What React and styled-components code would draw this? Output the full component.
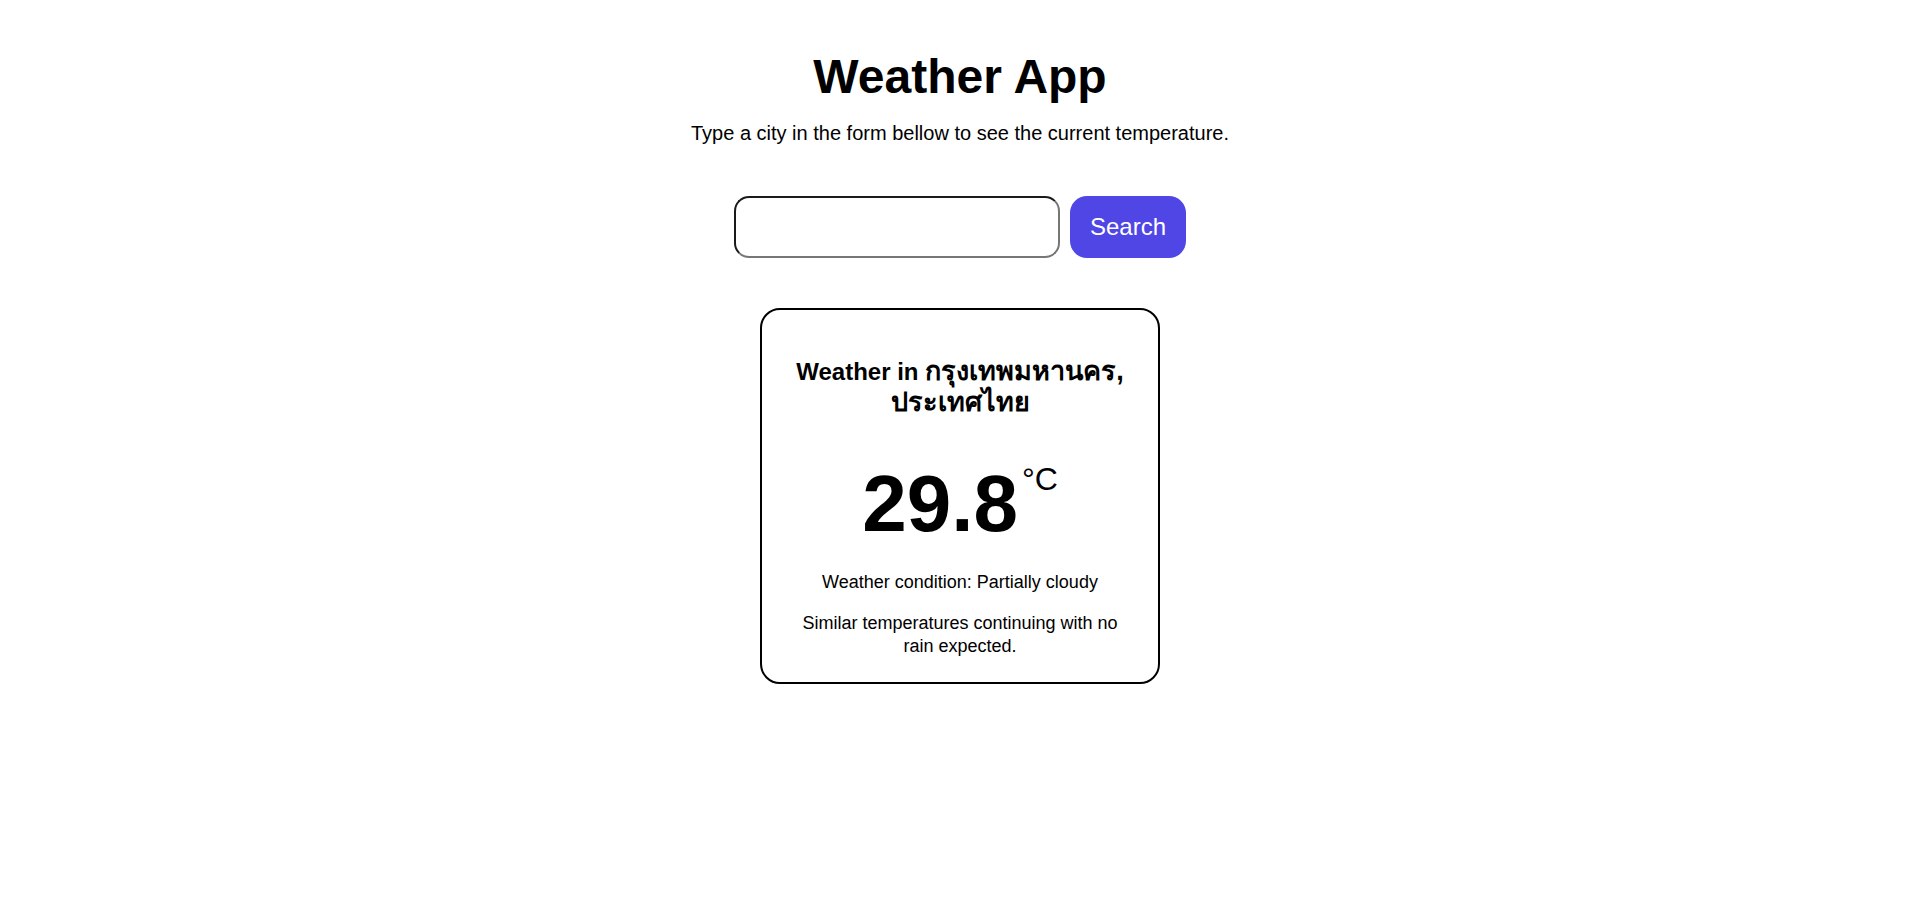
import React, { useState } from "react";
import styled, { createGlobalStyle } from "styled-components";

const GlobalStyle = createGlobalStyle`
  html, body {
    margin: 0;
    padding: 0;
    background: #ffffff;
  }
  body {
    font-family: "Liberation Sans", Arial, "Noto Sans", sans-serif;
    color: #000000;
  }
  * {
    box-sizing: border-box;
  }
`;

function App() {
  const [city, setCity] = useState("");

  const weather = {
    place: "กรุงเทพมหานคร, ประเทศไทย",
    temp: 29.8,
    condition: "Partially cloudy",
    description: "Similar temperatures continuing with no rain expected.",
  };

  const handleSubmit = (e) => {
    e.preventDefault();
  };

  return (
    <>
      <GlobalStyle />
      <Page>
        <Title>Weather App</Title>
        <Subtitle>
          Type a city in the form bellow to see the current temperature.
        </Subtitle>

        <SearchForm onSubmit={handleSubmit}>
          <CityInput
            type='text'
            value={city}
            onChange={(e) => setCity(e.target.value)}
          />
          <SearchButton type='submit'>Search</SearchButton>
        </SearchForm>

        <WeatherCard>
          <CardTitle>
            Weather in <ThaiText>{weather.place}</ThaiText>
          </CardTitle>
          <TempRow>
            <TempValue>{weather.temp}</TempValue>
            <TempUnit>°C</TempUnit>
          </TempRow>
          <CardText>Weather condition: {weather.condition}</CardText>
          <CardText $gap>{weather.description}</CardText>
        </WeatherCard>
      </Page>
    </>
  );
}

export default App;

const Page = styled.div`
  display: flex;
  flex-direction: column;
  align-items: center;
  padding: 49px 0 40px 5px;
  text-align: center;
`;

const Title = styled.h1`
  margin: 0;
  font-size: 48px;
  line-height: 55px;
  font-weight: bold;
`;

const Subtitle = styled.p`
  margin: 18px 0 0;
  font-size: 20px;
  line-height: 23px;
`;

const SearchForm = styled.form`
  display: flex;
  gap: 10px;
  margin-top: 51px;
`;

const CityInput = styled.input`
  width: 326px;
  height: 62px;
  border-width: 2px;
  border-style: solid;
  border-color: #1a1a1a #767676 #767676 #1a1a1a;
  border-radius: 15px;
  padding: 0 14px;
  font-size: 20px;
  font-family: inherit;
  outline: none;
`;

const SearchButton = styled.button`
  display: flex;
  align-items: center;
  justify-content: center;
  width: 116px;
  height: 62px;
  border: none;
  border-radius: 17px;
  background-color: #4f46e5;
  color: #ffffff;
  font-family: inherit;
  font-size: 24px;
  cursor: pointer;
`;

const WeatherCard = styled.div`
  display: flex;
  flex-direction: column;
  align-items: center;
  width: 400px;
  margin-top: 50px;
  padding: 46px 30px 24px;
  border: 2px solid #000000;
  border-radius: 20px;
`;

const CardTitle = styled.h2`
  margin: 0;
  font-size: 24px;
  line-height: 31px;
  font-weight: bold;
`;

const ThaiText = styled.span`
  font-size: 27px;
`;

const TempRow = styled.div`
  display: flex;
  align-items: flex-start;
  margin-top: 46px;
`;

const TempValue = styled.div`
  font-size: 80px;
  line-height: 80px;
  font-weight: bold;
`;

const TempUnit = styled.span`
  font-size: 32px;
  line-height: 32px;
  margin-top: -1px;
  margin-left: 4px;
`;

const CardText = styled.p`
  margin: ${(p) => (p.$gap ? "18px" : "27px")} 0 0;
  font-size: 18px;
  line-height: 23px;
`;
